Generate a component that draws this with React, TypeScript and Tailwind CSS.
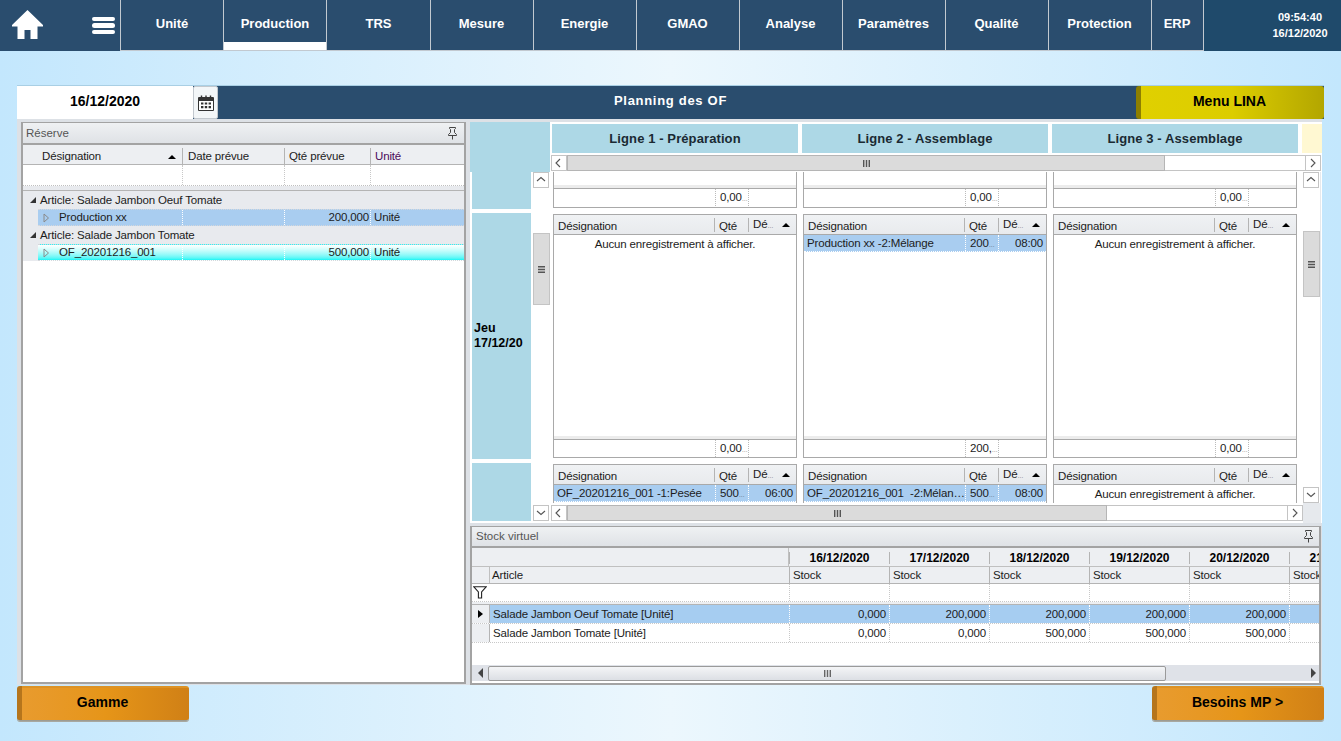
import React from "react";

const tabs: [string, string][] = [
  ["Unité", "w-[103px]"], ["Production", "w-[103px]"], ["TRS", "w-[104px]"], ["Mesure", "w-[103px] pr-px"],
  ["Energie", "w-[103px] pr-px"], ["GMAO", "w-[103px] pr-px"], ["Analyse", "w-[103px] pr-px"], ["Paramètres", "w-[103px] pr-px"],
  ["Qualité", "w-[103px] pr-px"], ["Protection", "w-[103px] pr-px"], ["ERP", "w-[52px] pr-px"],
];

function Pin() {
  return (
    <svg width="11" height="13" viewBox="0 0 11 13" fill="none" stroke="#444" strokeWidth="1">
      <path d="M2.5 .5h6v1l-1 1v3l2 2v1h-8v-1l2-2v-3l-1-1zM5.5 8.5v4" />
    </svg>
  );
}

function Chevron({ dir }: { dir: "l" | "r" | "u" | "d" }) {
  const d = { l: "M6 1 2 5l4 4", r: "M3 1l4 4-4 4", u: "M1 6l4-3.5L9 6", d: "M1 3l4 3.5L9 3" }[dir];
  return (
    <svg width="10" height="10" viewBox="0 0 10 10" fill="none" stroke="#555" strokeWidth="1.1"><path d={d} /></svg>
  );
}

function ScrollBtn({ dir }: { dir: "l" | "r" | "u" | "d" }) {
  return (
    <div className="w-[16px] h-[16px] shrink-0 bg-white border border-[#c4c4c4] flex items-center justify-center">
      <Chevron dir={dir} />
    </div>
  );
}

function HScroll({ thumb, rest, className }: { thumb: string; rest: string; className: string }) {
  return (
    <div className={`h-[16px] flex bg-white ${className}`}>
      <ScrollBtn dir="l" />
      <div className={`${thumb} h-[16px] bg-[#dbdbdb] border border-[#b5b5b5] flex items-center justify-center`}>
        <svg width="7" height="7" viewBox="0 0 7 7" fill="#555"><path d="M0 0h1.4v7H0zM2.8 0h1.4v7H2.8zM5.6 0H7v7H5.6z" /></svg>
      </div>
      <div className={`${rest} h-[16px] border-y border-[#c4c4c4]`} />
      <ScrollBtn dir="r" />
    </div>
  );
}

function VScroll({ top, thumb, rest, className }: { top: string; thumb: string; rest: string; className: string }) {
  return (
    <div className={`w-[17px] flex flex-col bg-white ${className}`}>
      <ScrollBtn dir="u" />
      <div className={top} />
      <div className={`${thumb} w-[17px] bg-[#dbdbdb] border border-[#c4c4c4] flex items-center justify-center`}>
        <svg width="7" height="7" viewBox="0 0 7 7" fill="#555"><path d="M0 0h7v1.4H0zM0 2.8h7v1.4H0zM0 5.6h7V7H0z" /></svg>
      </div>
      <div className={rest} />
      <ScrollBtn dir="d" />
    </div>
  );
}

function SortUp() {
  return <span className="w-0 h-0 border-x-[4px] border-x-transparent border-b-[4px] border-b-black" />;
}

function Trunc({ v }: { v: string }) {
  return (
    <>
      {v}
      <span className="text-[6px] tracking-[-0.3px]">…</span>
    </>
  );
}

function Footer({ v }: { v: string }) {
  return (
    <div className="h-[18px] flex border-t border-[#a9a9a9] bg-white">
      <div className="w-[161px]" />
      <div className="w-[34px] border-x border-dotted border-[#bbbbbb] pl-[4px] leading-[16px] whitespace-nowrap">
        <Trunc v={v} />
      </div>
    </div>
  );
}

function CardHead() {
  return (
    <div className="h-[20px] shrink-0 flex items-center bg-gradient-to-b from-[#f0f2f4] to-[#e8eaed] border-b border-[#a9a9a9]">
      <div className="w-[161px] pl-[4px] border-r border-[#b4b4b4] h-[14px] leading-[16px]">Désignation</div>
      <div className="w-[34px] pl-[4px] border-r border-[#b4b4b4] h-[14px] leading-[16px]">Qté</div>
      <div className="flex-1 pl-[4px] flex items-center justify-between pr-[6px] h-[14px]">
        <span><Trunc v="Dé" /></span> <SortUp />
      </div>
    </div>
  );
}

function PlanRow({ a, b, c }: { a: string; b: string; c: string }) {
  return (
    <div className="h-[17px] shrink-0 flex bg-[#a9cdf0] border-b border-dotted border-white leading-[16px]">
      <div className="w-[161px] pl-[3px] whitespace-nowrap overflow-hidden">{a}</div>
      <div className="w-[34px] pl-[4px] border-x border-dotted border-white whitespace-nowrap">
        <Trunc v={b} />
      </div>
      <div className="flex-1 text-right pr-[3px]">{c}</div>
    </div>
  );
}

function Empty() {
  return <div className="text-center h-[18px] leading-[18px] shrink-0">Aucun enregistrement à afficher.</div>;
}

function PlanColumn({ foot1, foot2, mid, low }: { foot1: string; foot2: string; mid: React.ReactNode; low: React.ReactNode }) {
  return (
    <div className="w-[244px] shrink-0 flex flex-col gap-[6px]">
      <div className="h-[36px] shrink-0 flex flex-col border-x border-b border-[#a9a9a9]">
        <div className="h-[13px] bg-white" />
        <div className="h-[3px] bg-[#ececec]" />
        <Footer v={foot1} />
      </div>
      <div className="h-[244px] shrink-0 flex flex-col border border-[#a9a9a9]">
        <CardHead />
        <div className="flex-1 flex flex-col">{mid}</div>
        <div className="h-[3px] bg-[#ececec]" />
        <Footer v={foot2} />
      </div>
      <div className="h-[60px] shrink-0 flex flex-col border border-[#a9a9a9]">
        <CardHead />
        {low}
      </div>
    </div>
  );
}

function OrangeButton({ children }: { children: React.ReactNode }) {
  return (
    <div className="w-[172px] h-[35px] flex rounded-[3px] overflow-hidden border-b border-[#9c9c94] shadow-[0_1px_0_#a8a8a0]">
      <div className="w-[5px] bg-[#b5751c]" />
      <div className="flex-1 flex items-center justify-center border-t-[2px] border-[#dc9226] bg-gradient-to-r from-[#e89b2e] via-[#e69518] to-[#d08016] font-bold text-[14px] text-black pr-[6px] pb-[3px]">
        {children}
      </div>
    </div>
  );
}

const days = ["16/12/2020", "17/12/2020", "18/12/2020", "19/12/2020", "20/12/2020", "21/12/2020"];
const r1 = ["0,000", "200,000", "200,000", "200,000", "200,000", ""];
const r2 = ["0,000", "0,000", "500,000", "500,000", "500,000", ""];

function StockRow({ name, vals, sel }: { name: string; vals: string[]; sel?: boolean }) {
  return (
    <div className="h-[19px] flex border-b border-dotted border-[#c8c8c8]">
      <div className="w-[18px] shrink-0 bg-[#edeff2] border-r border-[#b4b4b4] flex items-center justify-center">
        {sel && <span className="w-0 h-0 border-y-[4px] border-y-transparent border-l-[5px] border-l-black" />}
      </div>
      <div className={`w-[299px] shrink-0 pl-[3px] leading-[18px] ${sel ? "bg-[#a6cdf1]" : ""}`}>{name}</div>
      {vals.map((v, i) => (
        <div key={i} className={`w-[100px] shrink-0 text-right pr-[3px] leading-[18px] border-l border-dotted ${sel ? "bg-[#a6cdf1] border-white" : "border-[#c8c8c8]"}`}>{v}</div>
      ))}
    </div>
  );
}

function ReserveRow({ name, qty, cyan }: { name: string; qty: string; cyan?: boolean }) {
  const bg = cyan ? "bg-gradient-to-b from-white to-[#00f5f5]" : "bg-[#a9cdf0]";
  return (
    <div className={`h-[17px] ml-[15px] flex leading-[15px] border-y border-dotted border-[#d4d7dc] ${bg}`}>
      <div className="w-[144px] flex items-center">
        <svg className="ml-[5px] mr-[9px]" width="7" height="10" viewBox="0 0 7 10" fill="none" stroke="#8a8a8a"><path d="M1 1l4.5 4L1 9z" /></svg>
        {name}
      </div>
      <div className="w-[102px] border-l border-dotted border-white" />
      <div className="w-[86px] border-l border-dotted border-white text-right pr-[1px]">{qty}</div>
      <div className="flex-1 border-l border-dotted border-white pl-[3px]">Unité</div>
    </div>
  );
}

function GroupRow({ label }: { label: string }) {
  return (
    <div className="h-[18px] flex items-center pl-[7px] gap-[4px] leading-[18px]">
      <span className="w-0 h-0 border-l-[6px] border-l-transparent border-b-[6px] border-b-[#333]" />
      {label}
    </div>
  );
}

const BOLD = "font-bold tracking-normal";

export default function App() {
  return (
    <div
      className="w-[1341px] h-[741px] overflow-hidden bg-gradient-to-r from-[#c3e7fd] via-[#ecf7fd] to-[#c3e7fd] text-[11.5px] tracking-[-0.15px] text-[#1c1c1c]"
      style={{ fontFamily: '"Liberation Sans", Arial, sans-serif' }}
    >
      <header className={`h-[51px] flex bg-[#2a4d6e] text-white text-[13px] ${BOLD}`}>
        <div className="w-[120px] shrink-0 flex items-center">
          <svg className="ml-[12px] mt-[-1px]" width="31" height="30" viewBox="0 0 31 30" fill="white">
            <path d="M15.5 0 31 15v1.5h-5.5V29h-7v-9h-6v9h-7V16.5H0V15z" />
          </svg>
          <div className="ml-[49px] flex flex-col gap-[2px]">
            <div className="w-[23px] h-[4px] rounded-full bg-white" />
            <div className="w-[23px] h-[5px] rounded-full bg-white" />
            <div className="w-[23px] h-[4px] rounded-full bg-white" />
          </div>
        </div>
        {tabs.map(([t, w]) => (
          <div key={t} className={`${w} shrink-0 relative flex items-center justify-center pb-[2px] border-l border-[#c2c9d0] border-b`}>
            {t}
            {t === "Production" && <div className="absolute left-0 right-0 bottom-0 h-[8px] bg-white" />}
          </div>
        ))}
        <div className="flex-1 border-l border-[#c2c9d0] bg-[#1f4a6b] flex flex-col items-center justify-center text-[11px] leading-[16px] pl-[55px] pb-[2px]">
          <div>09:54:40</div>
          <div>16/12/2020</div>
        </div>
      </header>

      <div className="pl-[17px] pt-[34px]">
        <div className="w-[1307px] h-[34px] flex bg-[#2a4d6e] border-t border-[#a9cfe4]">
          <div className={`w-[176px] bg-white flex items-center justify-center text-[14px] text-black pb-[2px] ${BOLD}`}>16/12/2020</div>
          <div className="w-[25px] bg-[#f3f6f8] rounded-[2px] border border-[#c2c8ce] flex items-center justify-center">
            <svg width="16" height="16" viewBox="0 0 16 16">
              <path d="M.5 2.5h15v13H.5z" fill="#fff" stroke="#333" strokeWidth="1" />
              <path d="M1 2h14v4H1z" fill="#333" />
              <path d="M3.5 0.5v3M8 .5v3M12.5 .5v3" stroke="#333" strokeWidth="1.4" />
              <path d="M3 7.5h2.4v2H3zM6.8 7.5h2.4v2H6.8zM10.6 7.5H13v2h-2.4zM3 11h2.4v2.2H3zM6.8 11h2.4v2.2H6.8zM10.6 11H13v2.2h-2.4z" fill="#333" />
            </svg>
          </div>
          <div className="flex-1 flex items-center justify-center text-white font-bold text-[13px] tracking-[0.7px] pb-[3px] pr-[13px]">Planning des OF</div>
          <div className="w-[188px] flex rounded-[3px] overflow-hidden">
            <div className="w-[5px] bg-[#8d7f00]" />
            <div className={`flex-1 flex items-center justify-center text-[14px] text-black bg-gradient-to-r from-[#e0d000] via-[#dccd00] to-[#b3a600] pb-[3px] pr-[6px] ${BOLD}`}>Menu LINA</div>
          </div>
        </div>

        <div className="w-[1305px] h-[566px] bg-[#dde1e6] flex pt-[3px] pl-[4px] gap-[4px]">
          {/* Réserve */}
          <section className="w-[445px] h-[562px] shrink-0 flex flex-col border-2 border-t border-[#a3a3a3] bg-white">
            <div className="h-[22px] shrink-0 flex items-center justify-between pl-[3px] pr-[6px] pt-px bg-gradient-to-b from-[#eff1f3] to-[#dfe2e6] border-b-2 border-[#a3a3a3] text-[#555]">
              <span className="text-[11.5px] tracking-normal">Réserve</span>
              <Pin />
            </div>
            <div className="h-[20px] shrink-0 flex items-center pt-[4px] bg-[#edeff2] border-b border-[#b4b4b4]">
              <div className="w-[159px] pl-[19px] pr-[6px] flex items-center justify-between">Désignation <SortUp /></div>
              <div className="w-[102px] pl-[5px] border-l border-[#b4b4b4]">Date prévue</div>
              <div className="w-[86px] pl-[4px] border-l border-[#b4b4b4]">Qté prévue</div>
              <div className="flex-1 pl-[4px] border-l border-[#b4b4b4] text-[#4a0a5a]">Unité</div>
            </div>
            <div className="h-[21px] shrink-0 flex border-b border-dotted border-[#c0c0c0]">
              <div className="w-[159px]" />
              <div className="w-[102px] border-l border-dotted border-[#c8c8c8]" />
              <div className="w-[86px] border-l border-dotted border-[#c8c8c8]" />
              <div className="flex-1 border-l border-dotted border-[#c8c8c8]" />
            </div>
            <div className="h-[5px] shrink-0 bg-[#e8eaee] border-b border-[#b4b4b4]" />
            <div className="bg-[#e8eaee]">
              <GroupRow label="Article: Salade Jambon Oeuf Tomate" />
              <ReserveRow name="Production xx" qty="200,000" />
              <GroupRow label="Article: Salade Jambon Tomate" />
              <ReserveRow name="OF_20201216_001" qty="500,000" cyan />
            </div>
          </section>

          <div className="w-[852px] shrink-0 flex flex-col gap-[3px]">
            {/* Planning */}
            <section className="h-[401px] shrink-0 flex flex-col bg-white overflow-hidden">
              <div className="h-[50px] shrink-0 flex">
                <div className="w-[80px] bg-[#add8e6]" />
                <div className="flex-1 flex flex-col pl-px">
                  <div className="h-[33px] pt-[2px] flex gap-[4px] font-bold text-[13px] tracking-[0.1px] text-[#1a2a33] pl-px">
                    {["Ligne 1 - Préparation", "Ligne 2 - Assemblage", "Ligne 3 - Assemblage"].map((l) => (
                      <div key={l} className="w-[246px] h-[29px] bg-[#add8e6] flex items-center justify-center">{l}</div>
                    ))}
                    <div className="flex-1 h-[29px] bg-[#fff8d2]" />
                  </div>
                  <HScroll className="w-[770px]" thumb="w-[598px]" rest="w-[140px]" />
                </div>
              </div>
              <div className="flex-1 flex min-h-0">
                <div className={`w-[62px] shrink-0 pl-[2px] flex flex-col gap-[4px] bg-white text-[12.5px] text-black ${BOLD}`}>
                  <div className="w-[59px] h-[37px] bg-[#add8e6]" />
                  <div className="w-[59px] h-[246px] bg-[#add8e6] flex items-center pl-[2px] pb-[1px] leading-[15px]">Jeu<br />17/12/20</div>
                  <div className="w-[59px] h-[58px] bg-[#add8e6]" />
                </div>
                <VScroll className="ml-px h-[349px]" top="h-[45px] shrink-0" thumb="h-[72px] shrink-0" rest="flex-1" />
                <div className="w-[770px] ml-px flex flex-col">
                  <div className="h-[332px] shrink-0 flex overflow-hidden">
                    <div className="w-[752px] shrink-0 h-[331px] overflow-hidden flex gap-[6px] pl-[2px]">
                      <PlanColumn foot1="0,00" foot2="0,00" mid={<Empty />} low={<PlanRow a="OF_20201216_001 -1:Pesée" b="500" c="06:00" />} />
                      <PlanColumn foot1="0,00" foot2="200," mid={<PlanRow a="Production xx -2:Mélange" b="200" c="08:00" />} low={<PlanRow a={"OF_20201216_001\u00a0\u00a0-2:Mélan…"} b="500" c="08:00" />} />
                      <PlanColumn foot1="0,00" foot2="0,00" mid={<Empty />} low={<Empty />} />
                    </div>
                    <div className="flex-1 bg-[#e6e9ed]">
                      <VScroll className="h-[331px]" top="h-[43px] shrink-0" thumb="h-[66px] shrink-0" rest="flex-1" />
                    </div>
                  </div>
                  <div className="flex-1 flex">
                    <HScroll className="w-[752px] mt-px" thumb="w-[540px]" rest="w-[180px]" />
                    <div className="flex-1 bg-[#e6e9ed]" />
                  </div>
                </div>
              </div>
            </section>

            {/* Stock virtuel */}
            <section className="w-[851px] h-[159px] shrink-0 flex flex-col border-2 border-t border-[#a3a3a3] bg-white overflow-hidden">
              <div className="h-[21px] shrink-0 flex items-center justify-between pl-[4px] pr-[5px] bg-gradient-to-b from-[#eff1f3] to-[#dfe2e6] border-b-2 border-[#a3a3a3] text-[#555]">
                <span className="text-[11.5px] tracking-normal">Stock virtuel</span>
                <Pin />
              </div>
              <div className={`h-[19px] shrink-0 flex bg-[#edeff2] border-b border-[#c0c0c0] text-[12px] text-black ${BOLD}`}>
                <div className="w-[317px] shrink-0 border-r border-[#c0c0c0]" />
                {days.map((d) => (
                  <div key={d} className="w-[100px] shrink-0 text-center leading-[18px] border-l border-[#b4b4b4] h-[12px] mt-[4px] flex items-center justify-center">{d}</div>
                ))}
              </div>
              <div className="h-[17px] shrink-0 flex bg-[#edeff2] border-b border-[#b4b4b4] leading-[16px]">
                <div className="w-[18px] shrink-0 border-r border-[#c0c0c0]" />
                <div className="w-[299px] shrink-0 pl-[2px]">Article</div>
                {days.map((d) => (
                  <div key={d} className="w-[100px] shrink-0 pl-[3px] border-l border-[#b4b4b4]">Stock</div>
                ))}
              </div>
              <div className="h-[18px] shrink-0 flex border-b border-dotted border-[#c8c8c8]">
                <div className="w-[16px] shrink-0 mr-[2px] flex items-center justify-center">
                  <svg width="14" height="13" viewBox="0 0 14 13" fill="none" stroke="#222" strokeWidth="1.1"><path d="M.7.7h12.6L8.6 6v6H5.4V6z" /></svg>
                </div>
                <div className="w-[299px] shrink-0" />
                {days.map((d) => <div key={d} className="w-[100px] shrink-0 border-l border-dotted border-[#c8c8c8]" />)}
              </div>
              <div className="h-[3px] shrink-0 bg-[#edeff2] border-b border-[#b4b4b4]" />
              <StockRow name="Salade Jambon Oeuf Tomate [Unité]" vals={r1} sel />
              <StockRow name="Salade Jambon Tomate [Unité]" vals={r2} />
              <div className="flex-1" />
              <div className="h-[16px] shrink-0 flex items-center bg-[#dfe2e8] mb-[2px]">
                <div className="w-[16px] flex justify-center"><span className="w-0 h-0 border-y-[5px] border-y-transparent border-r-[5px] border-r-[#444]" /></div>
                <div className="w-[678px] h-[15px] rounded-[2px] border border-[#9a9a9a] bg-gradient-to-b from-[#f4f5f7] to-[#dcdfe4] flex items-center justify-center">
                  <svg width="7" height="7" viewBox="0 0 7 7" fill="#666"><path d="M0 0h1.4v7H0zM2.8 0h1.4v7H2.8zM5.6 0H7v7H5.6z" /></svg>
                </div>
                <div className="flex-1 flex justify-end pr-[3px]"><span className="w-0 h-0 border-y-[5px] border-y-transparent border-l-[5px] border-l-[#444]" /></div>
              </div>
            </section>
          </div>
        </div>

        <div className={`w-[1307px] pt-px flex justify-between ${BOLD}`}>
          <OrangeButton>Gamme</OrangeButton>
          <OrangeButton>Besoins MP &gt;</OrangeButton>
        </div>
      </div>
    </div>
  );
}
